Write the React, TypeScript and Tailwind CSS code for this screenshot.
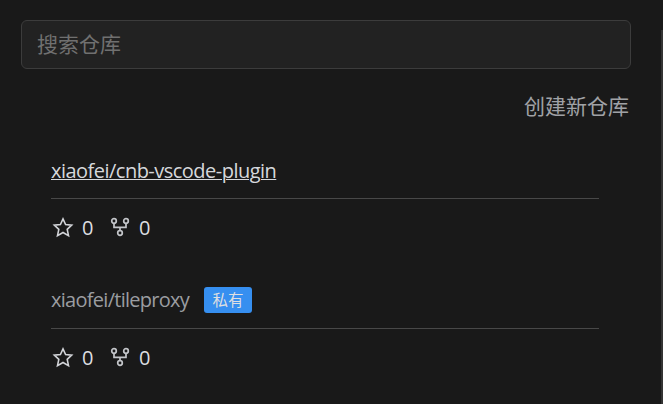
import React from "react";

const cjk = "font-['Open_Sans','Noto_Sans_CJK_SC',sans-serif]";

function StarIcon() {
  return (
    <svg width="22" height="22" viewBox="0 0 22 22" fill="none" stroke="#d2d4d8" strokeWidth="1.6" strokeLinejoin="miter">
      <path d="M11 2.9 L13.6 8.5 L19.7 9.2 L15.2 13.4 L16.5 19.6 L11 16.5 L5.5 19.6 L6.8 13.4 L2.3 9.2 L8.4 8.5 Z" />
    </svg>
  );
}

function ForkIcon() {
  return (
    <svg width="22" height="22" viewBox="0 0 22 22" fill="none" stroke="#c3c5c9" strokeWidth="1.7">
      <circle cx="5" cy="5" r="2.3" />
      <circle cx="17" cy="5" r="2.3" />
      <circle cx="11" cy="17" r="2.3" />
      <path d="M5 7.3 V11.4 H17 V7.3 M11 11.4 V14.7" />
    </svg>
  );
}

function Stats() {
  return (
    <div className="flex h-[58px] items-center text-[20px] leading-[28px] text-[#dedfe1]">
      <span className="mb-[2px] ml-px"><StarIcon /></span>
      <span className="ml-[8px] w-[12px]">0</span>
      <span className="mb-[2px] ml-[15px]"><ForkIcon /></span>
      <span className="ml-[8px]">0</span>
    </div>
  );
}

export default function App() {
  return (
    <div className={`flex h-[404px] w-[663px] overflow-hidden bg-[#191919] ${cjk}`}>
      <main className="flex w-[661px] flex-col pt-[20px] pr-[30px] pl-[21px]">
        <input
          placeholder="搜索仓库"
          className="h-[49px] w-full shrink-0 rounded-[6px] border border-[#3c3c3c] bg-[#222222] px-[15px] pb-[2px] text-[21px] font-normal text-[#cccccc] outline-none placeholder:text-[#707070]"
        />
        <div className="mt-[23px] flex h-[30px] shrink-0 items-center justify-end pr-[2px] text-[21px] font-normal text-[#a0a2a6]">
          创建新仓库
        </div>
        <section className="mt-[26px] mr-[32px] ml-[30px]">
          <div className="flex h-[51px] items-center border-b border-[#484848] pb-[4px] text-[20px] text-[#d6d8dc]">
            <a className="tracking-[-0.52px] underline decoration-1 underline-offset-[1px]">xiaofei/cnb-vscode-plugin</a>
          </div>
          <Stats />
        </section>
        <section className="mt-[21px] mr-[32px] ml-[30px]">
          <div className="flex h-[51px] items-center border-b border-[#484848] pb-[6px] text-[20px] text-[#9b9da1]">
            <a className="w-[153px] tracking-[-0.72px]">xiaofei/tileproxy</a>
            <span className="flex h-[26px] w-[48px] items-center justify-center rounded-[3px] bg-[#368ff0] pt-[2px] text-[15.5px] text-[#dedfe1]">私有</span>
          </div>
          <Stats />
        </section>
      </main>
      <div className="mt-[30px] w-[2px] bg-[#333333]" />
    </div>
  );
}
